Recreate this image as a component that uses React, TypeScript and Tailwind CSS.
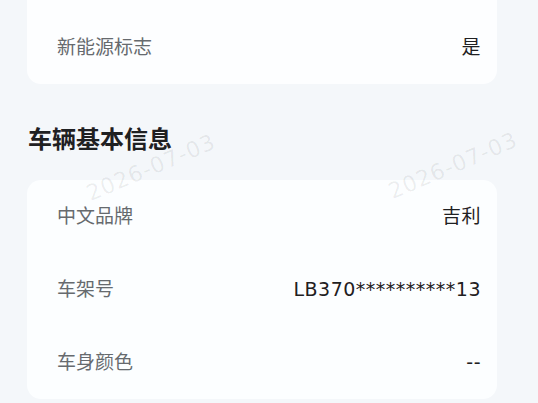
import React from "react";

const font = {
  fontFamily: '"DejaVu Sans", "Noto Sans CJK SC", sans-serif',
};

type Row = { label: string; value: string };

function InfoRow({ label, value }: Row) {
  return (
    <div className="flex h-[73px] items-center justify-between pl-[30px] pr-[16px]">
      <span className="text-[19px] text-[#666a6e]">{label}</span>
      <span className="text-[19px] tracking-[0.5px] text-[#1f2022]">{value}</span>
    </div>
  );
}

const basicInfo: Row[] = [
  { label: "中文品牌", value: "吉利" },
  { label: "车架号", value: "LB370**********13" },
  { label: "车身颜色", value: "--" },
];

export default function App() {
  return (
    <div
      className="relative h-[403px] w-[538px] overflow-hidden bg-[#f4f7fa] pl-[27px] pr-[41px]"
      style={font}
    >
      <div className="rounded-b-[14px] bg-[#fdfeff] pt-[11px]">
        <InfoRow label="新能源标志" value="是" />
      </div>

      <div className="flex h-[96px] items-center pl-[1px] pt-[16px]">
        <h2 className="text-[24px] font-bold text-[#1f2022]">车辆基本信息</h2>
      </div>

      <div className="rounded-[14px] bg-[#fcfeff]">
        {basicInfo.map((r) => (
          <InfoRow key={r.label} {...r} />
        ))}
      </div>

      {/* date watermarks */}
      <span className="pointer-events-none absolute left-[82px] top-[151px] origin-center -rotate-[23deg] text-[22px] tracking-[1px] text-[#000000]/[0.07]">
        2026-07-03
      </span>
      <span className="pointer-events-none absolute left-[384px] top-[149px] origin-center -rotate-[23deg] text-[22px] tracking-[1px] text-[#000000]/[0.07]">
        2026-07-03
      </span>
    </div>
  );
}
